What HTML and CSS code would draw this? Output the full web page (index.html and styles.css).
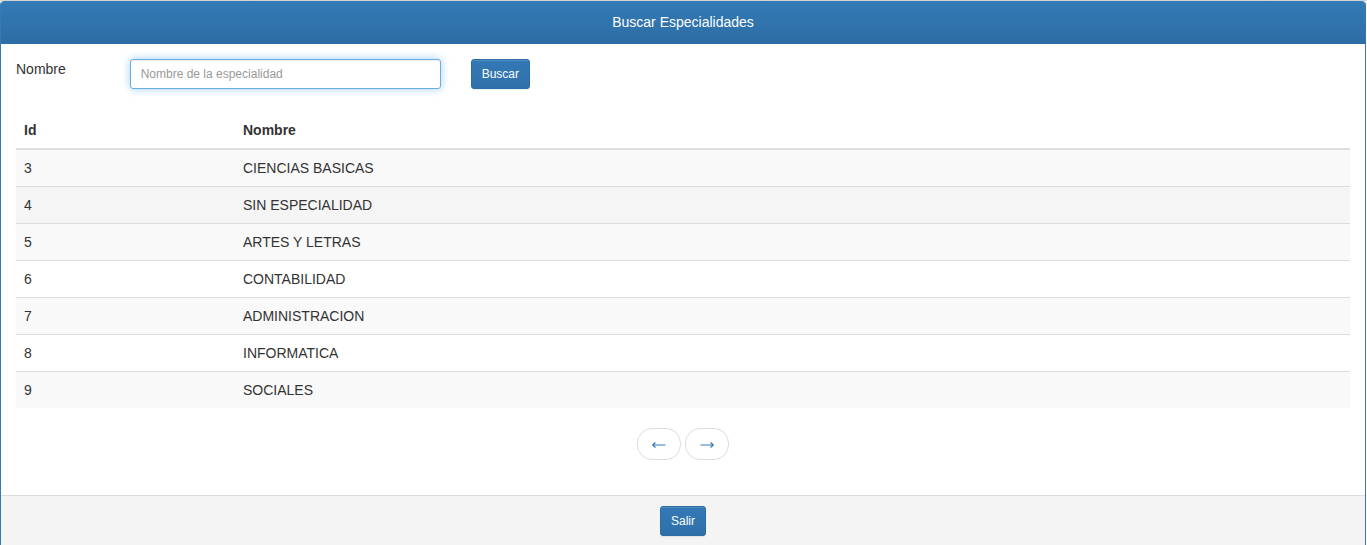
FILE: index.html
```html
<!DOCTYPE html>
<html lang="es">
<head>
<meta charset="utf-8">
<title>Buscar Especialidades</title>
<link rel="stylesheet" href="styles.css">
</head>
<body>
<div class="panel">
  <div class="panel-heading">Buscar Especialidades</div>
  <div class="panel-body">
    <div class="form-row">
      <label class="label" for="nombre">Nombre</label>
      <input class="input" id="nombre" type="text" placeholder="Nombre de la especialidad">
      <button class="btn btn-buscar" type="button">Buscar</button>
    </div>
    <table class="table">
      <thead>
        <tr><th class="col-id">Id</th><th>Nombre</th></tr>
      </thead>
      <tbody>
        <tr><td>3</td><td>CIENCIAS BASICAS</td></tr>
        <tr class="hover"><td>4</td><td>SIN ESPECIALIDAD</td></tr>
        <tr><td>5</td><td>ARTES Y LETRAS</td></tr>
        <tr><td>6</td><td>CONTABILIDAD</td></tr>
        <tr><td>7</td><td>ADMINISTRACION</td></tr>
        <tr><td>8</td><td>INFORMATICA</td></tr>
        <tr><td>9</td><td>SOCIALES</td></tr>
      </tbody>
    </table>
    <div class="pager">
      <a class="pager-btn" href="#" aria-label="Anterior">
        <svg class="arrow" width="16" height="10" viewBox="0 0 16 10" aria-hidden="true"><path d="M1.5 5H14.5M1.5 5L4.5 2.5M1.5 5L4.5 7.5" fill="none" stroke="currentColor" stroke-width="1.1"/></svg>
      </a>
      <a class="pager-btn" href="#" aria-label="Siguiente">
        <svg class="arrow" width="16" height="10" viewBox="0 0 16 10" aria-hidden="true"><path d="M1.5 5H14.5M14.5 5L11.5 2.5M14.5 5L11.5 7.5" fill="none" stroke="currentColor" stroke-width="1.1"/></svg>
      </a>
    </div>
  </div>
  <div class="panel-footer">
    <button class="btn" type="button">Salir</button>
  </div>
</div>
</body>
</html>
```

FILE: styles.css
```css
* { box-sizing: border-box; }

html, body {
  margin: 0;
  padding: 0;
  background: #fff;
}

body {
  border-top: 1px solid #d4d4d4;
  font-family: "Liberation Sans", Arial, Helvetica, sans-serif;
  font-size: 14px;
  line-height: 20px;
  color: #333;
}

.panel {
  width: 1366px;
  border: 1px solid #337ab7;
  border-top: 0;
  border-radius: 4px 4px 0 0;
  background: #fff;
  overflow: hidden;
}

.panel-heading {
  height: 43px;
  padding: 11px 15px;
  text-align: center;
  color: #fff;
  font-size: 14px;
  line-height: 20px;
  background-color: #337ab7;
  background-image: linear-gradient(to bottom, #337ab7 0%, #2e6da4 100%);
  border-radius: 3px 3px 0 0;
}

.panel-body {
  padding: 15px;
}

.form-row {
  display: grid;
  grid-template-columns: repeat(12, 1fr);
  column-gap: 30px;
  align-items: start;
  margin-bottom: 23px;
}

.label {
  grid-column: span 1;
  font-size: 14px;
  line-height: 20px;
}

.input {
  grid-column: span 3;
  height: 30px;
  padding: 5px 10px;
  font-family: inherit;
  font-size: 12px;
  line-height: 18px;
  color: #555;
  background: #fff;
  border: 1px solid #66afe9;
  border-radius: 3px;
  outline: 0;
  box-shadow: inset 0 1px 1px rgba(0,0,0,.075), 0 0 8px rgba(102,175,233,.6);
}

.input::placeholder {
  color: #999;
}

.btn {
  height: 30px;
  padding: 5px 10px;
  font-family: inherit;
  font-size: 12px;
  line-height: 18px;
  color: #fff;
  background-color: #337ab7;
  background-image: linear-gradient(to bottom, #3379b6 0%, #2f70aa 100%);
  border: 1px solid #2e6da4;
  border-radius: 3px;
  box-shadow: inset 0 1px 0 rgba(255,255,255,.15), 0 1px 1px rgba(0,0,0,.075);
  cursor: pointer;
}

.btn-buscar {
  grid-column: 5 / span 1;
  justify-self: start;
}

.table {
  width: 100%;
  border-collapse: collapse;
  border-spacing: 0;
}

.table th {
  text-align: left;
  font-weight: bold;
  padding: 8px;
  line-height: 20px;
  border-bottom: 2px solid #ddd;
}

.col-id {
  width: 219px;
}

.table td {
  padding: 8px;
  line-height: 20px;
  border-top: 1px solid #ddd;
}

.table tbody tr:first-child td {
  border-top: 0;
}

.table tbody tr:nth-child(odd) {
  background: #f9f9f9;
}

.table tbody tr.hover {
  background: #f5f5f5;
}

.pager {
  display: flex;
  justify-content: center;
  gap: 4px;
  margin: 20px 0;
}

.pager-btn {
  display: flex;
  align-items: center;
  justify-content: center;
  width: 44px;
  height: 32px;
  color: #337ab7;
  text-decoration: none;
  background: #fff;
  border: 1px solid #ddd;
  border-radius: 15px;
}

.arrow {
  display: block;
  margin-top: 2px;
}

.panel-footer {
  padding: 10px 15px 15px;
  text-align: center;
  background: #f4f4f4;
  border-top: 1px solid #ddd;
}
```
